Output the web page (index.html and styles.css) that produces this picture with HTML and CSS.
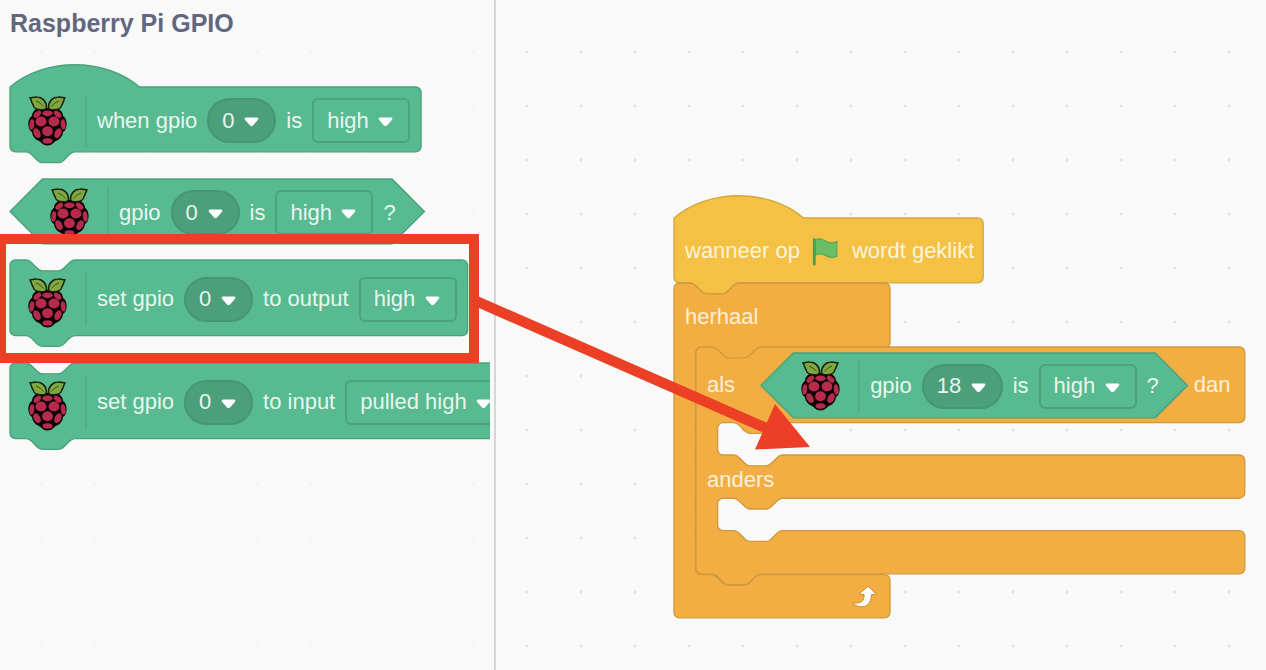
FILE: index.html
```html
<!DOCTYPE html>
<html lang="nl">
<head>
<meta charset="utf-8">
<meta name="viewport" content="width=device-width, initial-scale=1">
<title>Raspberry Pi GPIO</title>
<link rel="stylesheet" href="styles.css">
</head>
<body>
<svg class="defs" aria-hidden="true">
  <symbol id="berry" viewBox="0 0 39 50">
    <path d="M19.500 12C16 12 13 11 11 12C7 13 4 16 4 20C1 22 0 26 .5 30C1 33 2 35 4 36C4.500 41 8 44 12 45.500C15 48.500 17 49.500 19.500 49.500C22 49.500 24 48.500 27 45.500C31 44 34.500 41 35 36C37 35 38 33 38.500 30C39 26 38 22 35 20C35 16 32 13 28 12C26 11 23 12 19.500 12Z" fill="#0b0307"/>
    <g fill="#80a740" stroke="#172009" stroke-width="1.500" stroke-linejoin="round">
      <path d="M2 1.800C4 1.800 6 .8 9 1C14 1.200 18.500 5 18.500 11.500Q18 13.800 15 13.700C9 14 5.500 12 5 8.500C3.500 6.500 3.500 4 2 1.800Z"/>
      <path d="M37 1.800C35 1.800 33 .8 30 1C25 1.200 20.500 5 20.500 11.500Q21 13.800 24 13.700C30 14 33.500 12 34 8.500C35.500 6.500 35.500 4 37 1.800Z"/>
    </g>
    <path d="M8 5C11 6 13.500 8 15.500 10.500M31 5C28 6 25.500 8 23.500 10.500" fill="none" stroke="#38501e" stroke-width="1"/>
    <g fill="#b62a4b">
      <ellipse cx="19.500" cy="17.300" rx="5.200" ry="2.900"/>
      <ellipse cx="9.300" cy="18.200" rx="4.400" ry="2.700" transform="rotate(-40 9.300 18.200)"/>
      <ellipse cx="29.700" cy="18.200" rx="4.400" ry="2.700" transform="rotate(40 29.700 18.200)"/>
      <ellipse cx="13" cy="25.500" rx="5.500" ry="5"/>
      <ellipse cx="26" cy="25.500" rx="5.500" ry="5"/>
      <ellipse cx="3.800" cy="28.500" rx="2.400" ry="5.200" transform="rotate(6 3.800 28.500)"/>
      <ellipse cx="35.200" cy="28.500" rx="2.400" ry="5.200" transform="rotate(-6 35.200 28.500)"/>
      <ellipse cx="19.500" cy="35.200" rx="5.400" ry="5"/>
      <ellipse cx="9" cy="37.200" rx="3.300" ry="5.200" transform="rotate(-28 9 37.200)"/>
      <ellipse cx="30" cy="37.200" rx="3.300" ry="5.200" transform="rotate(28 30 37.200)"/>
      <ellipse cx="19.500" cy="45" rx="5" ry="2.800"/>
    </g>
  </symbol>
  <symbol id="caret" viewBox="0 0 15 10">
    <path d="M2 .5H13Q15 .8 14 2.800L9 8.500Q7.500 9.800 6 8.500L1 2.800Q0 .8 2 .5Z" fill="#fff"/>
  </symbol>
</svg>

<main class="editor">
  <aside class="palette">
    <div class="flyout">
      <h1 class="title">Raspberry Pi GPIO</h1>
      <div class="block-list">
        <div class="block green">
          <svg class="shape" aria-hidden="true"><path d="M0 0C25-22 71-22 96 0H300.500a4 4 0 0 1 4 4v40a4 4 0 0 1-4 4H48c-2 0-3 1-4 2l-4 4c-1 1-2 2-4 2h-12c-2 0-3-1-4-2l-4-4c-1-1-2-2-4-2H4a4 4 0 0 1-4-4z"/></svg>
          <svg class="berry" aria-hidden="true"><use href="#berry"/></svg>
          <span class="divider"></span>
          <span>when gpio</span>
          <span class="field round"><select aria-label="gpio pin"><option>0</option></select><svg aria-hidden="true"><use href="#caret"/></svg></span>
          <span>is</span>
          <span class="field"><select aria-label="gpio level"><option>high</option></select><svg aria-hidden="true"><use href="#caret"/></svg></span>
        </div>

        <div class="block green boolean">
          <svg class="shape" aria-hidden="true"><path d="M24 0H283L307 24L283 48H24L0 24z"/></svg>
          <svg class="berry" aria-hidden="true"><use href="#berry"/></svg>
          <span class="divider"></span>
          <span>gpio</span>
          <span class="field round"><select aria-label="gpio pin"><option>0</option></select><svg aria-hidden="true"><use href="#caret"/></svg></span>
          <span>is</span>
          <span class="field"><select aria-label="gpio level"><option>high</option></select><svg aria-hidden="true"><use href="#caret"/></svg></span>
          <span>?</span>
        </div>

        <div class="block green stack first">
          <svg class="shape" aria-hidden="true"><path d="M0 4A4 4 0 0 1 4 0H12c2 0 3 1 4 2l4 4c1 1 2 2 4 2h12c2 0 3-1 4-2l4-4c1-1 2-2 4-2H335a4 4 0 0 1 4 4v48a4 4 0 0 1-4 4H48c-2 0-3 1-4 2l-4 4c-1 1-2 2-4 2h-12c-2 0-3-1-4-2l-4-4c-1-1-2-2-4-2H4a4 4 0 0 1-4-4z"/></svg>
          <svg class="berry" aria-hidden="true"><use href="#berry"/></svg>
          <span class="divider"></span>
          <span>set gpio</span>
          <span class="field round"><select aria-label="gpio pin"><option>0</option></select><svg aria-hidden="true"><use href="#caret"/></svg></span>
          <span>to output</span>
          <span class="field"><select aria-label="output level"><option>high</option></select><svg aria-hidden="true"><use href="#caret"/></svg></span>
        </div>

        <div class="block green stack">
          <svg class="shape" aria-hidden="true"><path d="M0 4A4 4 0 0 1 4 0H12c2 0 3 1 4 2l4 4c1 1 2 2 4 2h12c2 0 3-1 4-2l4-4c1-1 2-2 4-2H375a4 4 0 0 1 4 4v48a4 4 0 0 1-4 4H48c-2 0-3 1-4 2l-4 4c-1 1-2 2-4 2h-12c-2 0-3-1-4-2l-4-4c-1-1-2-2-4-2H4a4 4 0 0 1-4-4z"/></svg>
          <svg class="berry" aria-hidden="true"><use href="#berry"/></svg>
          <span class="divider"></span>
          <span>set gpio</span>
          <span class="field round"><select aria-label="gpio pin"><option>0</option></select><svg aria-hidden="true"><use href="#caret"/></svg></span>
          <span>to input</span>
          <span class="field"><select aria-label="input mode"><option>pulled high</option></select><svg aria-hidden="true"><use href="#caret"/></svg></span>
        </div>
      </div>
    </div>
  </aside>

  <section class="workspace" aria-label="Script">
    <div class="script">
      <div class="block event">
        <svg class="shape" aria-hidden="true"><path d="M0 0C25-22 71-22 96 0H225a4 4 0 0 1 4 4v40a4 4 0 0 1-4 4H48c-2 0-3 1-4 2l-4 4c-1 1-2 2-4 2h-12c-2 0-3-1-4-2l-4-4c-1-1-2-2-4-2H4a4 4 0 0 1-4-4z"/></svg>
        <span>wanneer op</span>
        <svg class="flag" viewBox="0 0 32 32" role="img" aria-label="groene vlag">
          <path d="M4 4.500C10 .5 14 5.500 19 7C22 7.800 25 7 27.500 6V21.500C23 24 19 23 15 20.500C11 18.500 8 18.500 4.500 20.500Z" fill="#6abf66" stroke="#56a653" stroke-width="1.300"/>
          <path d="M3.500 4V30" stroke="#509c4c" stroke-width="3" stroke-linecap="round"/>
        </svg>
        <span>wordt geklikt</span>
      </div>

      <div class="control">
        <svg class="shape" aria-hidden="true"><path d="M0 4A4 4 0 0 1 4 0H12c2 0 3 1 4 2l4 4c1 1 2 2 4 2h12c2 0 3-1 4-2l4-4c1-1 2-2 4-2H156a4 4 0 0 1 4 4v40a4 4 0 0 1-4 4H64c-2 0-3 1-4 2l-4 4c-1 1-2 2-4 2h-12c-2 0-3-1-4-2l-4-4c-1-1-2-2-4-2h-8a4 4 0 0 0-4 4v160a4 4 0 0 0 4 4h8c2 0 3 1 4 2l4 4c1 1 2 2 4 2h12c2 0 3-1 4-2l4-4c1-1 2-2 4-2H156a4 4 0 0 1 4 4v24a4 4 0 0 1-4 4H4a4 4 0 0 1-4-4z"/></svg>
        <div class="row repeat">herhaal</div>
        <div class="control inner">
          <svg class="shape" aria-hidden="true"><path d="M0 4A4 4 0 0 1 4 0H12c2 0 3 1 4 2l4 4c1 1 2 2 4 2h12c2 0 3-1 4-2l4-4c1-1 2-2 4-2H402.500a4 4 0 0 1 4 4v48a4 4 0 0 1-4 4H64c-2 0-3 1-4 2l-4 4c-1 1-2 2-4 2h-12c-2 0-3-1-4-2l-4-4c-1-1-2-2-4-2h-8a4 4 0 0 0-4 4v16a4 4 0 0 0 4 4h8c2 0 3 1 4 2l4 4c1 1 2 2 4 2h12c2 0 3-1 4-2l4-4c1-1 2-2 4-2H402.500a4 4 0 0 1 4 4v24a4 4 0 0 1-4 4H64c-2 0-3 1-4 2l-4 4c-1 1-2 2-4 2h-12c-2 0-3-1-4-2l-4-4c-1-1-2-2-4-2h-8a4 4 0 0 0-4 4v16a4 4 0 0 0 4 4h8c2 0 3 1 4 2l4 4c1 1 2 2 4 2h12c2 0 3-1 4-2l4-4c1-1 2-2 4-2H402.500a4 4 0 0 1 4 4v24a4 4 0 0 1-4 4H48c-2 0-3 1-4 2l-4 4c-1 1-2 2-4 2h-12c-2 0-3-1-4-2l-4-4c-1-1-2-2-4-2H4a4 4 0 0 1-4-4z"/></svg>
          <div class="row condition">
            <span class="if-word">als</span>
            <div class="block green boolean">
              <svg class="shape" aria-hidden="true"><path d="M24 0H292L316 24L292 48H24L0 24z"/></svg>
              <svg class="berry" aria-hidden="true"><use href="#berry"/></svg>
              <span class="divider"></span>
              <span>gpio</span>
              <span class="field round"><select aria-label="gpio pin"><option>18</option></select><svg aria-hidden="true"><use href="#caret"/></svg></span>
              <span>is</span>
              <span class="field"><select aria-label="gpio level"><option>high</option></select><svg aria-hidden="true"><use href="#caret"/></svg></span>
              <span>?</span>
            </div>
            <span>dan</span>
          </div>
          <div class="mouth"></div>
          <div class="row">anders</div>
          <div class="mouth"></div>
          <div class="row"></div>
        </div>
        <div class="row foot">
          <svg class="loop" viewBox="0 0 26 24" aria-hidden="true"><path d="M1.500 17.500C4 18.500 10 18.500 12 15C13.200 13 13 11 13 9.500H9.500Q8.500 9 9.300 8L16 2Q17 1.200 18 2L24 8Q25 9.300 23.500 9.500H20.500C20.500 14 19 18.500 15.500 20.500C11 23 4 21.500 1.500 17.500Z" fill="#fff" stroke="#cf8b17" stroke-width="1"/></svg>
        </div>
      </div>
    </div>
  </section>

  <svg class="annotation" aria-hidden="true">
    <rect x="1" y="239" width="473" height="119" fill="none" stroke="#eb4025" stroke-width="10"/>
    <path d="M476 301L775 432" stroke="#eb4025" stroke-width="10.500"/>
    <path d="M775 404L810 447L755 449.500Z" fill="#eb4025"/>
  </svg>
</main>
</body>
</html>
```
FILE: styles.css
```css
* {
  box-sizing: border-box;
}

body {
  margin: 0;
  background: #f9f9f9;
  font-family: "Liberation Sans", Arial, sans-serif;
  font-size: 22px;
  line-height: 26px;
}

.defs {
  position: absolute;
  width: 0;
  height: 0;
}

.editor {
  position: relative;
  display: flex;
  min-height: 100vh;
  overflow: hidden;
}

.palette {
  flex: 0 0 496px;
  min-width: 0;
  padding-right: 4px;
  border-right: 2px solid #d6d6d6;
  background: radial-gradient(circle, #f3f3f3 1px, transparent 2px) 14px 25px / 54px 54px;
}

.flyout {
  height: 100%;
  padding: 8px 0 0 10px;
  overflow: hidden;
}

.title {
  margin: 0;
  color: #62677f;
  font-size: 25px;
  line-height: 30px;
}

.block-list {
  display: flex;
  flex-direction: column;
  align-items: flex-start;
  gap: 27px;
  padding-top: 49px;
}

.block {
  position: relative;
  display: flex;
  align-items: center;
  gap: 10px;
  height: 65px;
  padding: 2px 10px 0 18px;
  color: #e8f6ef;
  white-space: nowrap;
}

.block > *,
.row > * {
  flex: none;
}

.stack {
  height: 76px;
}

.first {
  margin-top: -11px;
}

.boolean {
  padding: 2px 27px 0 40px;
}

.shape {
  position: absolute;
  top: 0;
  left: 0;
  width: 1px;
  height: 1px;
  overflow: visible;
}

.shape path {
  transform: scale(1.35);
  stroke-width: 1px;
}

.green > .shape {
  fill: #57ba90;
  stroke: #49a27c;
}

.block > :not(.shape) {
  position: relative;
}

.berry {
  width: 39px;
  height: 50px;
  margin-right: 8px;
}

.stack > .berry {
  margin-top: 8px;
}

.divider {
  width: 2px;
  height: 52px;
  background: #50ad84;
}

.field {
  position: relative;
  display: flex;
}

.field select {
  height: 45px;
  margin: 0;
  padding: 0 39px 0 13px;
  border: 2px solid #4ba27d;
  border-radius: 6px;
  background: transparent;
  color: inherit;
  font: inherit;
  appearance: none;
}

.round select {
  border-color: #469673;
  border-radius: 23px;
  background: #4b9f7b;
}

.field svg {
  position: absolute;
  top: 19px;
  right: 17px;
  width: 15px;
  height: 10px;
  pointer-events: none;
}

.workspace {
  position: relative;
  flex: 1;
  background: radial-gradient(circle, #e4e4e4 1px, transparent 2px) 4px 25px / 54px 54px;
}

.script {
  position: absolute;
  top: 218px;
  left: 178px;
}

.event {
  padding: 0 11px;
  color: #fdf5dc;
}

.event > .shape {
  fill: #f4c144;
  stroke: #d3a63f;
}

.flag {
  width: 32px;
  height: 30px;
}

.control {
  position: relative;
  color: #fdf0da;
}

.control > .shape {
  fill: #f2ae42;
  stroke: #d2983e;
}

.inner {
  margin-left: 22px;
}

.row {
  position: relative;
  display: flex;
  align-items: center;
  height: 43px;
  padding: 4px 11px 0;
}

.repeat {
  height: 64px;
}

.condition {
  gap: 8px;
  height: 76px;
  padding-top: 0;
}

.if-word {
  margin-right: 18px;
}

.mouth {
  height: 33px;
}

.foot {
  width: 216px;
  padding: 0 13px 0 0;
  justify-content: flex-end;
}

.loop {
  width: 26px;
  height: 24px;
}

.annotation {
  position: absolute;
  inset: 0;
  width: 100%;
  height: 100%;
  pointer-events: none;
}
```
